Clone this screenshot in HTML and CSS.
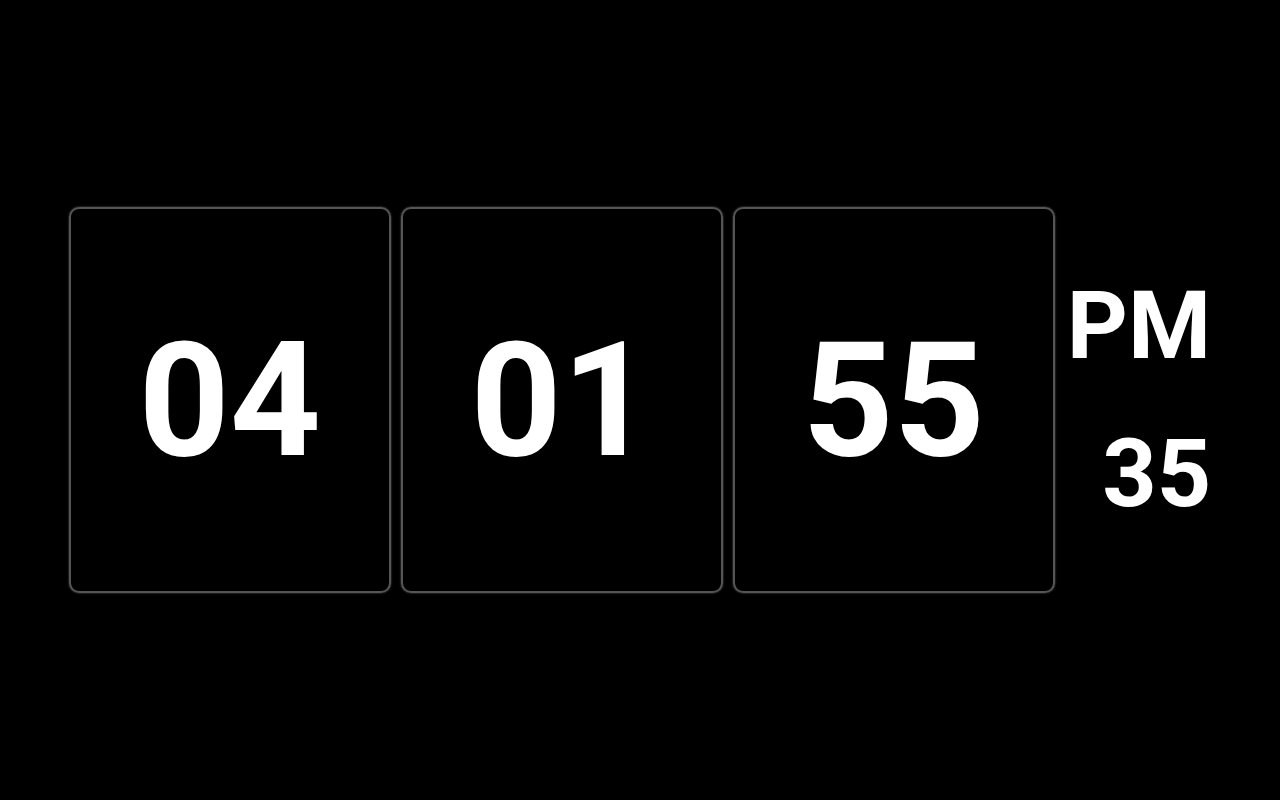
FILE: index.html
```html
<!DOCTYPE html>
<html lang="en">
<head>
<meta charset="utf-8">
<title>Clock</title>
<link rel="stylesheet" href="styles.css">
</head>
<body>
<main class="clock">
  <div class="card"><span class="digits">04</span></div>
  <div class="card"><span class="digits">01</span></div>
  <div class="card"><span class="digits">55</span></div>
  <div class="side">
    <span class="ampm">PM</span>
    <span class="secs">35</span>
  </div>
</main>
</body>
</html>
```

FILE: styles.css
```css
html, body {
  margin: 0;
  height: 100%;
  background: #000;
}
body {
  font-family: Roboto, "Liberation Sans", sans-serif;
  color: #fff;
}
.clock {
  height: 100%;
  display: flex;
  align-items: center;
  justify-content: center;
  gap: 10px;
}
.card {
  width: 318px;
  height: 382px;
  border: 2px solid #555;
  border-radius: 10px;
  box-shadow: 0 0 2px rgba(170,170,170,0.6);
  display: flex;
  align-items: center;
  justify-content: center;
}
.digits {
  font-size: 159px;
  font-weight: 700;
  line-height: 1;
}
.side {
  display: flex;
  flex-direction: column;
  align-items: flex-end;
  margin-left: 2px;
  font-weight: 700;
  font-size: 95px;
  line-height: 148px;
}
```
